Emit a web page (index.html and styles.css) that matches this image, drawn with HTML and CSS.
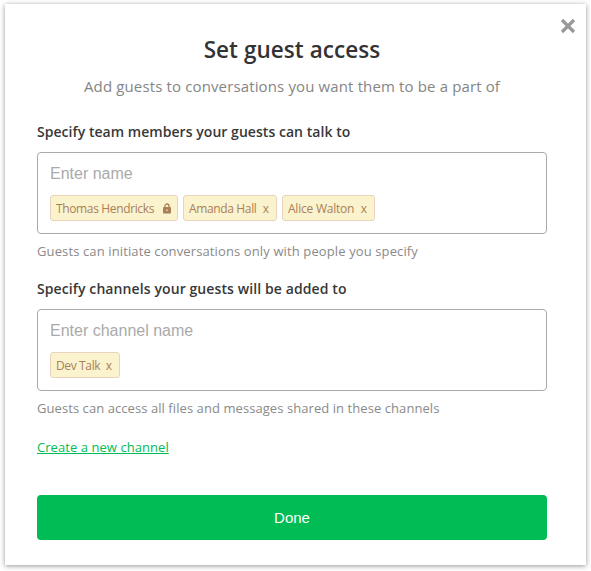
FILE: index.html
```html
<!DOCTYPE html>
<html lang="en">
<head>
<meta charset="utf-8">
<title>Set guest access</title>
<link rel="stylesheet" href="styles.css">
</head>
<body>
<main class="modal">
  <button class="close" aria-label="Close"><svg width="16" height="16" viewBox="0 0 16 16"><path d="M2 2l12 12M14 2L2 14"/></svg></button>
  <h1>Set guest access</h1>
  <p class="subtitle">Add guests to conversations you want them to be a part of</p>
  <section class="field members">
    <h2>Specify team members your guests can talk to</h2>
    <div class="box">
      <div class="placeholder">Enter name</div>
      <div class="tags">
        <div class="tag t1"><span>Thomas Hendricks</span><svg class="lock" width="8" height="11" viewBox="0 0 8 11"><path class="shackle" d="M2 5V3a2 2 0 0 1 4 0v2"/><rect y="4" width="8" height="6.5" rx="1"/><circle cx="4" cy="7.2" r=".8"/></svg></div>
        <div class="tag t2"><span>Amanda Hall</span><b>x</b></div>
        <div class="tag t3"><span>Alice Walton</span><b>x</b></div>
      </div>
    </div>
    <p class="hint">Guests can initiate conversations only with people you specify</p>
  </section>
  <section class="field channels">
    <h2>Specify channels your guests will be added to</h2>
    <div class="box">
      <div class="placeholder">Enter channel name</div>
      <div class="tags">
        <div class="tag t4"><span>Dev Talk</span><b>x</b></div>
      </div>
    </div>
    <p class="hint">Guests can access all files and messages shared in these channels</p>
  </section>
  <a class="create" href="#">Create a new channel</a>
  <button class="done">Done</button>
</main>
</body>
</html>
```
FILE: styles.css
```css
* { box-sizing: border-box; }
body { margin: 0; height: 571px; overflow: hidden; background: #fff; font-family: "Open Sans", "Noto Sans", sans-serif; }
.modal { position: relative; display: flex; flex-direction: column; width: 581px; height: 561px; margin: 4px 0 0 5px; padding: 30px 39px 0 32px; background: #fff; box-shadow: 0 1px 5px rgba(0,0,0,.42); }
h1, h2, p { margin: 0; white-space: nowrap; }
h1 { text-align: center; font-size: 22.5px; line-height: 32px; font-weight: 550; letter-spacing: .06px; color: #333; }
.subtitle { margin: 8px 0 21px; text-align: center; font-size: 15px; line-height: 24px; letter-spacing: .135px; color: #858585; }
.close { position: absolute; top: 14px; right: 10.5px; width: 16px; height: 16px; padding: 0; border: 0; background: none; }
.close svg { display: block; fill: none; stroke: #999; stroke-width: 3.2; }
.field { height: 157px; }
h2 { height: 33px; font-size: 14px; line-height: 26px; font-weight: 550; letter-spacing: .045px; color: #383838; }
.channels h2 { letter-spacing: .1px; }
.box { height: 82px; padding: 11px 12px; border: 1px solid #aaa; border-radius: 4px; }
.placeholder { font-family: "Liberation Sans", sans-serif; font-size: 16px; line-height: 20px; color: #aaa; }
.tags { display: flex; gap: 5px; margin-top: 11px; }
.tag { display: flex; align-items: center; justify-content: space-between; height: 26px; padding: 1px 6px 0 5px; border: 1px solid #e9d3bd; border-radius: 3px; background: #faf3cd; font-size: 12px; letter-spacing: -.36px; color: #aa8058; white-space: nowrap; }
.tag b { margin-right: 1px; font-weight: 400; letter-spacing: 0; }
.t1 { width: 128px; }
.t2 { width: 94px; }
.t3 { width: 93px; letter-spacing: -.22px; }
.t4 { width: 70px; }
.lock { margin-top: -1px; fill: #aa8058; }
.lock circle { fill: #faf3cd; }
.shackle { fill: none; stroke: #aa8058; stroke-width: 1.3; }
.hint { margin-top: 7px; font-size: 13px; line-height: 20px; letter-spacing: .12px; color: #8a8a8a; }
.channels .hint { letter-spacing: .07px; }
.create { align-self: flex-start; margin-top: 4px; font-size: 13px; line-height: 20px; letter-spacing: .06px; color: #00bc54; }
.done { height: 45px; margin-top: 38px; border: 0; border-radius: 4px; background: #00bc54; color: #fff; font: 15px "Liberation Sans", sans-serif; }
```
